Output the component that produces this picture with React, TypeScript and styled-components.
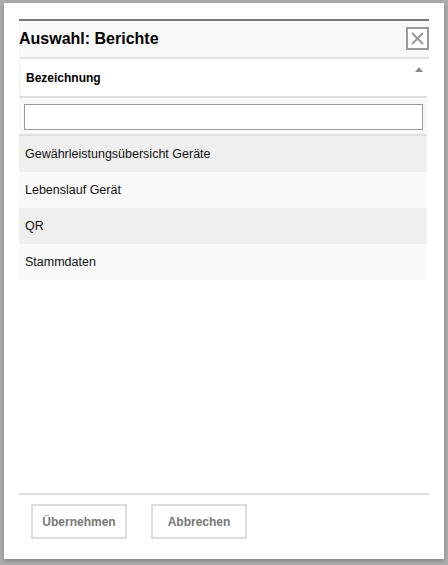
import styled, { createGlobalStyle } from 'styled-components'

const GlobalStyle = createGlobalStyle`
    html, body {
        margin:0;
        padding:0;
        background:#acacac;
        font-family:"Liberation Sans", Arial, sans-serif;
    }
`

const Backdrop = styled.div`
    width:448px;
    height:565px;
    padding:3px 0 0 4px;
    box-sizing:border-box;
`

const Dialog = styled.div`
    width:440px;
    height:556px;
    background:#fff;
    box-shadow:0 2px 4px rgba(0,0,0,0.25);
    padding:16px 15px 0 15px;
    box-sizing:border-box;
    display:flex;
    flex-direction:column;
`

const Header = styled.div`
    border-top:2px solid #777;
    background:#f8f8f8;
    height:36px;
    display:flex;
    align-items:center;
    justify-content:space-between;
    border-bottom:2px solid #e2e2e2;
`

const Title = styled.h2`
    margin:0;
    font-size:16px;
    font-weight:bold;
    color:#000;
`

const CloseButton = styled.button`
    width:23px;
    height:23px;
    border:2px solid #999;
    background:#fff;
    padding:0;
    margin:0 0 2px 0;
    display:flex;
    align-items:center;
    justify-content:center;
    box-sizing:border-box;
`

const Grid = styled.div`
    flex:1;
    margin-right:2px;
    margin-top:2px;
`

const GridHeader = styled.div`
    height:37px;
    background:#fff;
    border-left:1px solid #eee;
    border-bottom:2px solid #e0e0e0;
    display:flex;
    align-items:center;
    padding:0 0 2px 6px;
    box-sizing:border-box;
    font-size:12px;
    font-weight:bold;
    position:relative;
`

const SortArrow = styled.span`
    position:absolute;
    right:4px;
    top:6px;
    width:0;
    height:0;
    border-left:4px solid transparent;
    border-right:4px solid transparent;
    border-bottom:5px solid #888;
`

const FilterRow = styled.div`
    height:38px;
    background:#f8f8f8;
    border-bottom:2px solid #e0e0e0;
    padding:6px 4px 0 5px;
    box-sizing:border-box;
`

const FilterInput = styled.input`
    width:100%;
    height:26px;
    border:1px solid #999;
    box-sizing:border-box;
    background:#fff;
`

const Row = styled.div<{ $odd: boolean }>`
    height:36px;
    background:${({ $odd }) => ($odd ? '#efefef' : '#f9f9f9')};
    display:flex;
    align-items:center;
    padding-left:6px;
    font-size:12.5px;
    color:#111;
`

const Footer = styled.div`
    border-top:2px solid #ddd;
    height:66px;
    padding:9px 0 0 12px;
    box-sizing:border-box;
    display:flex;
    gap:24px;
    align-items:flex-start;
`

const FooterButton = styled.button`
    width:96px;
    height:35px;
    border:2px solid #ddd;
    background:#fff;
    font-family:"Liberation Sans", Arial, sans-serif;
    font-size:12px;
    font-weight:bold;
    color:#777;
    padding:0;
`

const reports = [
    'Gewährleistungsübersicht Geräte',
    'Lebenslauf Gerät',
    'QR',
    'Stammdaten'
]

const App = () => {
    return (
        <Backdrop>
            <GlobalStyle />
            <Dialog>
                <Header>
                    <Title>Auswahl: Berichte</Title>
                    <CloseButton aria-label="Schließen">
                        <svg width="13" height="13" viewBox="0 0 13 13">
                            <path d="M1 1 L12 12 M12 1 L1 12" stroke="#999" strokeWidth="2" />
                        </svg>
                    </CloseButton>
                </Header>
                <Grid>
                    <GridHeader>
                        Bezeichnung
                        <SortArrow />
                    </GridHeader>
                    <FilterRow>
                        <FilterInput type="text" />
                    </FilterRow>
                    {reports.map((r, i) => (
                        <Row key={r} $odd={i % 2 === 0}>{r}</Row>
                    ))}
                </Grid>
                <Footer>
                    <FooterButton>Übernehmen</FooterButton>
                    <FooterButton>Abbrechen</FooterButton>
                </Footer>
            </Dialog>
        </Backdrop>
    )
}

export default App
